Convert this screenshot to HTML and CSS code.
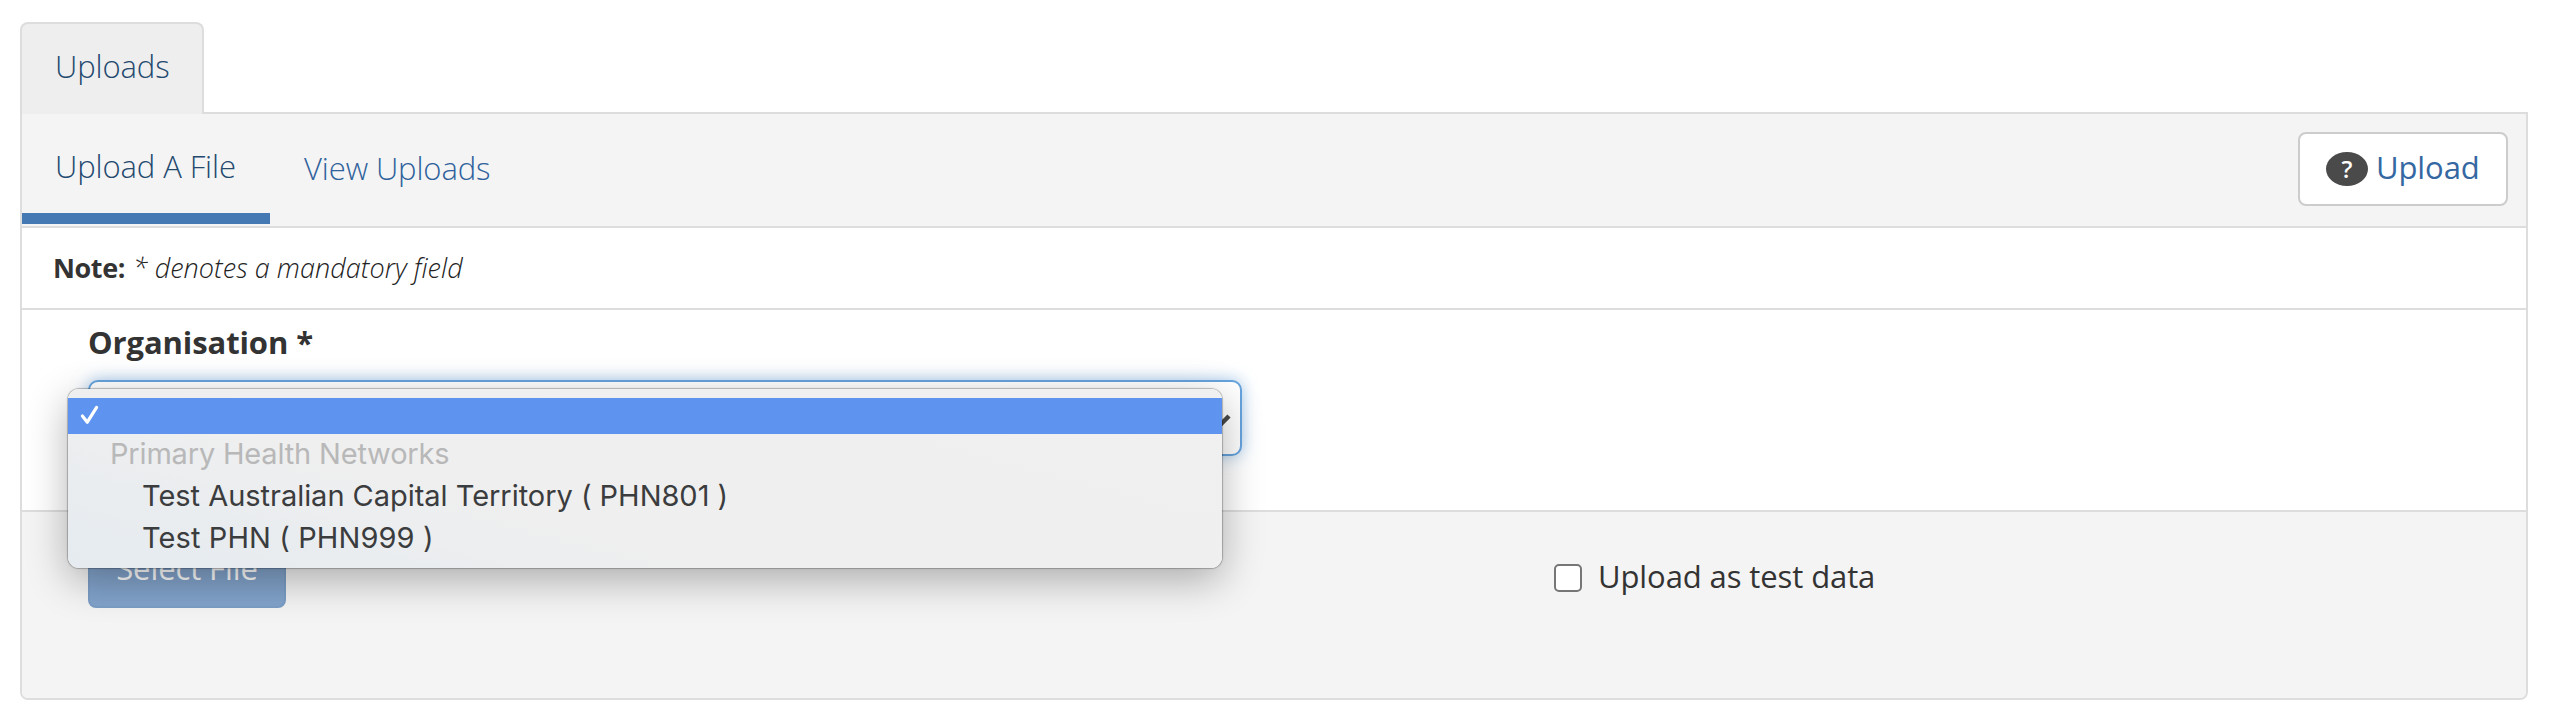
FILE: index.html
```
<!DOCTYPE html>
<html lang="en">
<head>
<meta charset="utf-8">
<title>Uploads</title>
<link rel="stylesheet" href="styles.css">
</head>
<body>
<nav class="tabs"><a class="tab">Uploads</a></nav>
<main class="panel">
  <header class="panel-head">
    <nav class="subnav">
      <a class="sub active"><span>Upload A File</span></a>
      <a class="sub next"><span>View Uploads</span></a>
    </nav>
    <button class="help"><span class="badge">?</span><span class="help-text">Upload</span></button>
  </header>
  <p class="note"><b class="note-label">Note:</b><i class="note-text">* denotes a mandatory field</i></p>
  <section class="fields">
    <label class="label"><span>Organisation *</span></label>
    <div class="select-wrap">
      <div class="select">
        <svg class="chevron" width="24" height="18" viewBox="0 0 24 18"><path d="M3 3l9 9 9-9" fill="none" stroke="#4a4a4a" stroke-width="4.5"/></svg>
      </div>
      <div class="menu">
        <div class="item selected"><svg width="20" height="20" viewBox="0 0 20 20"><path d="M2.4 11l4.9 6.2L16.6 2.4" fill="none" stroke="#fff" stroke-width="3.2" stroke-linecap="round" stroke-linejoin="round"/></svg></div>
        <div class="item group"><span>Primary Health Networks</span></div>
        <div class="item option"><span>Test Australian Capital Territory ( PHN801 )</span></div>
        <div class="item option"><span class="phn">Test PHN ( PHN999 )</span></div>
      </div>
    </div>
  </section>
  <footer class="actions">
    <button class="file"><span>Select File</span></button>
    <label class="check"><input class="box" type="checkbox"><span>Upload as test data</span></label>
  </footer>
</main>
</body>
</html>
```
FILE: styles.css
```
* { box-sizing: border-box; }
body {
  margin: 0;
  padding: 22px 22px 20px 20px;
  height: 720px;
  background: #fff;
  color: #333;
  font: 400 31px/44px "Open Sans", "Noto Sans", sans-serif;
  letter-spacing: -.1px;
}
.tabs { display: flex; height: 90px; }
.tab {
  position: relative;
  z-index: 1;
  width: 184px;
  height: 92px;
  padding: 20px 33px;
  border: 2px solid #ddd;
  border-bottom: 0;
  border-radius: 8px 8px 0 0;
  background: #eee;
  color: #23496f;
  font-weight: 300;
}
.panel {
  width: 2508px;
  height: 588px;
  border: 2px solid #ddd;
  border-radius: 0 0 8px 8px;
}
.panel-head {
  display: flex;
  justify-content: space-between;
  height: 114px;
  padding-right: 18px;
  border-bottom: 2px solid #ddd;
  background: #f4f4f4;
}
.subnav { display: flex; font-weight: 300; }
.sub { padding: 32px 33px 0; height: 110px; color: #2f629c; white-space: nowrap; }
.active {
  width: 248px;
  padding-top: 30px;
  border-bottom: 11px solid #4479b3;
  color: #23496f;
}
.next { padding-left: 34px; }
.help {
  display: flex;
  align-items: flex-start;
  width: 210px;
  height: 74px;
  margin-top: 18px;
  padding: 11px 0 0 26px;
  border: 2px solid #ccc;
  border-radius: 8px;
  background: #fff;
  color: #3568a2;
  font: inherit;
  letter-spacing: -.1px;
}
.badge {
  width: 42px;
  height: 34px;
  margin: 7px 8px 0 0;
  border-radius: 50%;
  background: #4a4a4a;
  color: #fff;
  font-size: 24px;
  font-weight: 600;
  line-height: 34px;
  text-align: center;
}
.note {
  display: flex;
  height: 82px;
  margin: 0;
  padding: 18px 0 0 31px;
  border-bottom: 2px solid #ddd;
  font-size: 27px;
}
.note-label { margin-right: 8px; letter-spacing: -.4px; }
.note-text { font-weight: 300; letter-spacing: .05px; color: #222; }
.fields { height: 200px; padding: 10px 66px 0; }
.label { display: block; height: 60px; font-weight: 700; }
.select-wrap { position: relative; width: 1154px; }
.select {
  display: flex;
  justify-content: flex-end;
  height: 76px;
  padding: 31px 8px 0 0;
  border: 2px solid #66a3dd;
  border-radius: 10px;
  background: #fff;
  box-shadow: 0 0 16px rgba(102, 163, 221, .6);
}
.menu {
  position: absolute;
  z-index: 2;
  top: 9px;
  left: -20px;
  width: 1154px;
  height: 179px;
  padding-top: 9px;
  border-radius: 11px;
  background: linear-gradient(15deg, #e5ebf0 0%, #efefef 38%, #f0f0f0 100%);
  box-shadow: 0 0 1px 1px rgba(0, 0, 0, .25), 0 12px 40px rgba(0, 0, 0, .3);
  color: #3b3c3e;
  font: 400 29px/42px Inter, "Liberation Sans", sans-serif;
  letter-spacing: -.03px;
}
.item { height: 42px; white-space: nowrap; }
.selected { height: 36px; padding: 7px 0 0 12px; background: #5e93f0; line-height: 0; }
.group { height: 41px; padding-left: 42px; color: #b8b8b9; line-height: 39px; letter-spacing: -.18px; }
.option { padding-left: 74px; }
.phn { letter-spacing: .1px; }
.actions {
  display: grid;
  grid-template-columns: 1532px auto;
  align-items: start;
  height: 188px;
  border-top: 2px solid #ddd;
  border-radius: 0 0 6px 6px;
  background: #f4f4f4;
}
.file {
  width: 198px;
  height: 76px;
  margin: 20px 0 0 66px;
  padding: 0 0 4px;
  border: 2px solid #7b9dc5;
  border-radius: 8px;
  background: #82a3cb;
  color: #fff;
  font: inherit;
  letter-spacing: -.1px;
}
.check { display: flex; padding-top: 42px; }
.box {
  appearance: none;
  width: 28px;
  height: 28px;
  margin: 10px 16px 0 0;
  border: 2px solid #767676;
  border-radius: 5px;
  background: #fff;
}
```
